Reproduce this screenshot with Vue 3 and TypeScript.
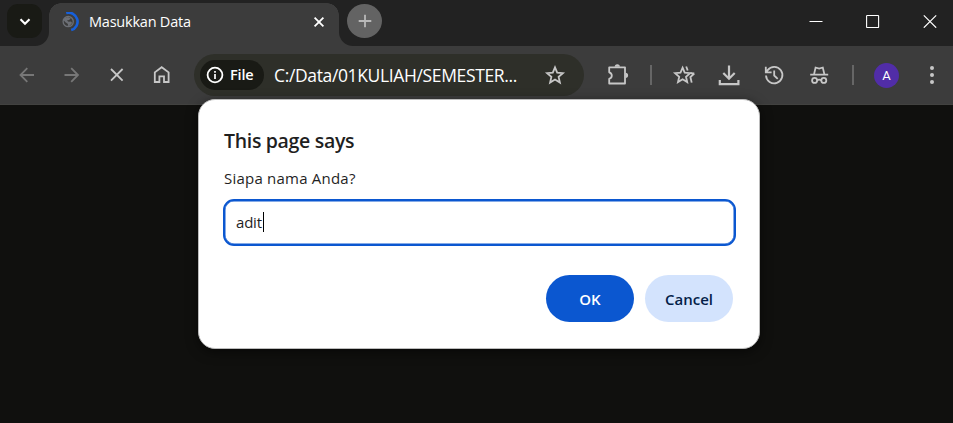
<script setup lang="ts">
import { ref } from 'vue'

const tabTitle = ref('Masukkan Data')
const address = ref('C:/Data/01KULIAH/SEMESTER...')
const answer = ref('adit')
</script>

<template>
  <div class="window">
    <header class="tabstrip">
      <div class="strip-left">
        <button class="tab-search" aria-label="Search tabs">
          <svg width="16" height="16" viewBox="0 0 16 16"><path d="M3.5 5.3 8 9.8l4.5-4.5" fill="none" stroke="#fff" stroke-width="2.1" /></svg>
        </button>
      </div>
      <div class="tab">
        <svg class="spinner" width="20" height="20" viewBox="0 0 20 20">
          <circle cx="7.2" cy="9.6" r="5.1" fill="#3c3c3c" stroke="#6c6f75" stroke-width="1.3" />
          <path d="M2.5 8 4 6l3-.9 2.8 1.3-1.8 1.5-2.1.5 1.6 1.3 2.5-.2 1.1 1.6-2.3 2.700-2 .1.2-1.800-2.600-1.800z" fill="#6c6f75" />
          <path d="M5.200 1.100a8.800 8.800 0 1 1 5 17" fill="none" stroke="#1660dc" stroke-width="2.600" />
        </svg>
        <span class="tab-title">{{ tabTitle }}</span>
        <svg class="tab-close" width="12" height="12" viewBox="0 0 12 12"><path d="m1.600 1.600 8.800 8.800m0-8.800-8.800 8.800" stroke="#fff" stroke-width="1.800" /></svg>
      </div>
      <div class="strip-right">
        <button class="new-tab" aria-label="New tab">
          <svg width="14" height="14" viewBox="0 0 14 14"><path d="M7 .7v12.600M.7 7h12.600" stroke="#b9b9b9" stroke-width="1.800" /></svg>
        </button>
        <div class="controls">
          <svg width="14" height="14" viewBox="0 0 14 14"><path d="M.5 7.500h13" stroke="#fff" /></svg>
          <svg width="14" height="14" viewBox="0 0 14 14"><rect x=".6" y="1.500" width="12" height="12" rx=".6" fill="none" stroke="#fff" stroke-width="1.100" /></svg>
          <svg width="14" height="14" viewBox="0 0 14 14"><path d="m.8 1.300 12.400 12.400m0-12.400L.8 13.700" stroke="#fff" stroke-width="1.200" /></svg>
        </div>
      </div>
    </header>

    <nav class="toolbar">
      <div class="cell">
        <svg class="icon dim" viewBox="0 0 24 24"><path d="M19 12H6M12.300 5.200 5.500 12l6.800 6.800" /></svg>
      </div>
      <div class="cell">
        <svg class="icon dim" viewBox="0 0 24 24"><path d="M4.500 12h13M11.200 5.200 18 12l-6.800 6.800" /></svg>
      </div>
      <div class="cell">
        <svg class="icon" viewBox="0 0 24 24"><path d="m6 6 11.600 11.600m0-11.600L6 17.600" /></svg>
      </div>
      <div class="cell">
        <svg class="icon" viewBox="0 0 24 24"><path d="M4.800 19V9.400l6.900-5.200 6.900 5.200V19h-4.600v-5.600H9.400V19z" /></svg>
      </div>
      <div class="omnibox">
        <div class="chip">
          <svg width="18" height="18" viewBox="0 0 18 18"><circle cx="9" cy="9" r="7.400" fill="none" stroke="#fff" stroke-width="1.800" /><path d="M9 8v5M9 5v1.800" stroke="#fff" stroke-width="1.700" /></svg>
          <span class="chip-label">File</span>
        </div>
        <span class="address">{{ address }}</span>
        <svg class="icon star" viewBox="0 0 24 24"><path d="m12 4.300 2.200 5.300 5.700.5-4.300 3.800 1.300 5.600-4.900-3-4.900 3 1.300-5.600-4.300-3.800 5.700-.5z" /></svg>
      </div>
      <div class="cell extensions">
        <svg class="icon" viewBox="0 0 24 24"><path d="M3.200 4.300H19v16.200H3.200v-4.600c1.700-.5 2.600-1.600 2.600-3.300s-.9-2.800-2.600-3.300z" stroke-linejoin="round" /><path class="solid" d="M8.700 3.800a2.600 2.600 0 0 1 5.200 0zM19.500 9.700a2.600 2.600 0 0 1 0 5.200z" /></svg>
      </div>
      <div class="divider"><i></i></div>
      <div class="cell">
        <svg class="icon" viewBox="0 0 24 24"><path d="m10.600 4.700 2.100 5 5.400.5-4.100 3.600 1.200 5.300-4.600-2.900-4.600 2.900 1.200-5.300-4.100-3.600 5.400-.5z" /><path d="m14.200 3.500 1.500 4M22.300 10.500l-3.900 3.500 1.300 5.600M18.300 10.200l4 .3" /></svg>
      </div>
      <div class="cell">
        <svg class="icon heavy" viewBox="0 0 24 24"><path d="M12 2.500v13M6.300 10l5.700 5.700 5.700-5.700M2.800 17v4.200h18.600V17" /></svg>
      </div>
      <div class="cell">
        <svg class="icon" viewBox="0 0 24 24"><path d="M4 12.500a8.200 8.200 0 1 0 1.700-5.400L4 9.300M3.800 3.800v5.500h5.800M12.200 7.500v5l3.500 3.300" /></svg>
      </div>
      <div class="cell">
        <svg class="icon" viewBox="0 0 24 24"><path d="M3.200 11.700h18M7 11.400l1.600-6.900 3.600 1 3.600-1 1.600 6.900M10 17.300q2.200-1.400 4.400 0" /><circle cx="7.600" cy="17.400" r="2.500" /><circle cx="16.800" cy="17.400" r="2.500" /></svg>
      </div>
      <div class="divider second"><i></i></div>
      <div class="cell"><span class="avatar">A</span></div>
      <div class="cell">
        <svg class="icon" viewBox="0 0 24 24"><g class="solid"><circle cx="12" cy="5" r="2" /><circle cx="12" cy="12" r="2" /><circle cx="12" cy="19" r="2" /></g></svg>
      </div>
    </nav>

    <section class="dialog" role="dialog">
      <h1>This page says</h1>
      <p>Siapa nama Anda?</p>
      <div class="field"><span>{{ answer }}</span><i class="caret"></i></div>
      <div class="actions">
        <button class="ok">OK</button>
        <button class="cancel">Cancel</button>
      </div>
    </section>
  </div>
</template>

<style>
body {
  margin: 0;
  background: #10100e;
  overflow: hidden;
}
</style>

<style scoped>
.window {
  width: 953px;
  height: 423px;
  background: #10100e;
  font-family: 'Open Sans', 'Noto Sans', sans-serif;
  overflow: hidden;
}
button {
  border: 0;
  padding: 0;
  font-family: inherit;
}
svg {
  display: block;
  flex: none;
}
.tabstrip {
  display: flex;
  height: 46px;
  background: #3c3c3c;
}
.strip-left {
  width: 49px;
  box-sizing: border-box;
  padding: 4px 0 0 7px;
  background: #222;
  border-bottom-right-radius: 14px;
}
.tab-search {
  width: 35px;
  height: 34px;
  border-radius: 11px;
  background: #191a15;
  display: flex;
  align-items: center;
  justify-content: center;
}
.tab-search svg {
  margin: 1px 0 0 1px;
}
.tab {
  width: 290px;
  height: 46px;
  box-sizing: border-box;
  display: flex;
  align-items: center;
  padding: 0 14px 5px 12px;
  border-top: 3px solid #222;
  background: #3c3c3c;
}
.strip-left,
.strip-right {
  position: relative;
}
.strip-left::after,
.strip-right::before {
  content: '';
  position: absolute;
  top: 3px;
  width: 12px;
  height: 12px;
}
.strip-left::after {
  left: 49px;
  background: radial-gradient(circle at 12px 12px, transparent 11.5px, #222 12px);
}
.strip-right::before {
  right: 614px;
  background: radial-gradient(circle at 0 12px, transparent 11.5px, #222 12px);
}
.tab-title {
  width: 224px;
  margin-left: 8px;
  color: #fff;
  font-size: 14.5px;
  letter-spacing: -0.22px;
  line-height: 20px;
  white-space: nowrap;
}
.strip-right {
  flex: 1;
  display: flex;
  justify-content: space-between;
  padding: 4px 16px 0 8px;
  background: #222;
  border-bottom-left-radius: 14px;
}
.new-tab {
  width: 35px;
  height: 34px;
  border-radius: 50%;
  background: #636363;
  display: flex;
  align-items: center;
  justify-content: center;
}
.controls {
  display: flex;
  gap: 43px;
  padding-top: 10px;
}
.toolbar {
  display: flex;
  height: 59px;
  box-sizing: border-box;
  align-items: center;
  padding: 0 0 0 4px;
  background: #3c3c3c;
  border-bottom: 1px solid #424240;
}
.cell {
  flex: none;
  width: 45px;
  display: flex;
  justify-content: center;
}
.icon {
  width: 24px;
  height: 24px;
  fill: none;
  stroke: #c7c7c7;
  stroke-width: 1.8;
}
.icon.dim {
  stroke: #777;
}
.icon.heavy {
  stroke-width: 2.2;
}
.icon .solid {
  fill: #c7c7c7;
  stroke: none;
}
.omnibox {
  flex: none;
  width: 390px;
  height: 42px;
  margin-left: 10px;
  box-sizing: border-box;
  padding: 0 17px 0 6px;
  display: flex;
  align-items: center;
  border-radius: 21px;
  background: #2e2f29;
}
.chip {
  flex: none;
  width: 64px;
  height: 30px;
  box-sizing: border-box;
  padding-left: 6px;
  display: flex;
  align-items: center;
  gap: 6px;
  border-radius: 15px;
  background: #191a15;
  color: #fff;
}
.chip-label {
  margin-top: -2px;
  font-size: 14.5px;
  font-weight: 600;
  letter-spacing: -0.15px;
}
.address {
  flex: none;
  width: 268.5px;
  margin-left: 10px;
  color: #fff;
  font-size: 17.5px;
  letter-spacing: -0.36px;
  white-space: nowrap;
}
.extensions {
  margin-left: 11px;
}
.divider {
  flex: none;
  width: 21px;
  display: flex;
  justify-content: center;
}
.divider.second {
  width: 23px;
}
.divider i {
  width: 2px;
  height: 20px;
  background: #666;
}
.avatar {
  width: 25px;
  height: 25px;
  border-radius: 50%;
  background: #512da8;
  color: #fff;
  font: 13px/25px Roboto, sans-serif;
  text-align: center;
}
.dialog {
  position: absolute;
  left: 198px;
  top: 99px;
  width: 562px;
  height: 250px;
  box-sizing: border-box;
  padding: 27px 24px 0 24px;
  border: 1px solid #bcbcbc;
  border-radius: 17px;
  background: #fff;
  color: #1f1f1f;
  box-shadow: 0 3px 12px #0008;
}
h1 {
  margin: 0 0 0 1px;
  font-size: 19.5px;
  line-height: 28px;
  font-weight: 600;
  letter-spacing: -0.32px;
}
p {
  margin: 12px 0 0 1px;
  font-size: 15px;
  line-height: 22px;
  letter-spacing: 0.22px;
}
.field {
  width: 512.5px;
  height: 47px;
  box-sizing: border-box;
  margin-top: 10px;
  padding: 0 0 1px 11px;
  display: flex;
  align-items: center;
  border: 2px solid #0b57d0;
  border-radius: 11px;
  box-shadow: inset 0 0 0 0.5px #0b57d0;
  font-size: 15px;
  letter-spacing: -0.2px;
}
.caret {
  width: 1px;
  height: 20px;
  margin-left: 1px;
  background: #000;
}
.actions {
  display: flex;
  justify-content: flex-end;
  gap: 11px;
  margin: 29px 2px 0 0;
}
.actions button {
  width: 88px;
  height: 47px;
  border-radius: 23.5px;
  font-size: 15px;
  font-weight: 600;
}
.actions .ok {
  background: #0b57d0;
  color: #fff;
}
.actions .cancel {
  background: #d3e3fd;
  color: #041e49;
}
</style>
